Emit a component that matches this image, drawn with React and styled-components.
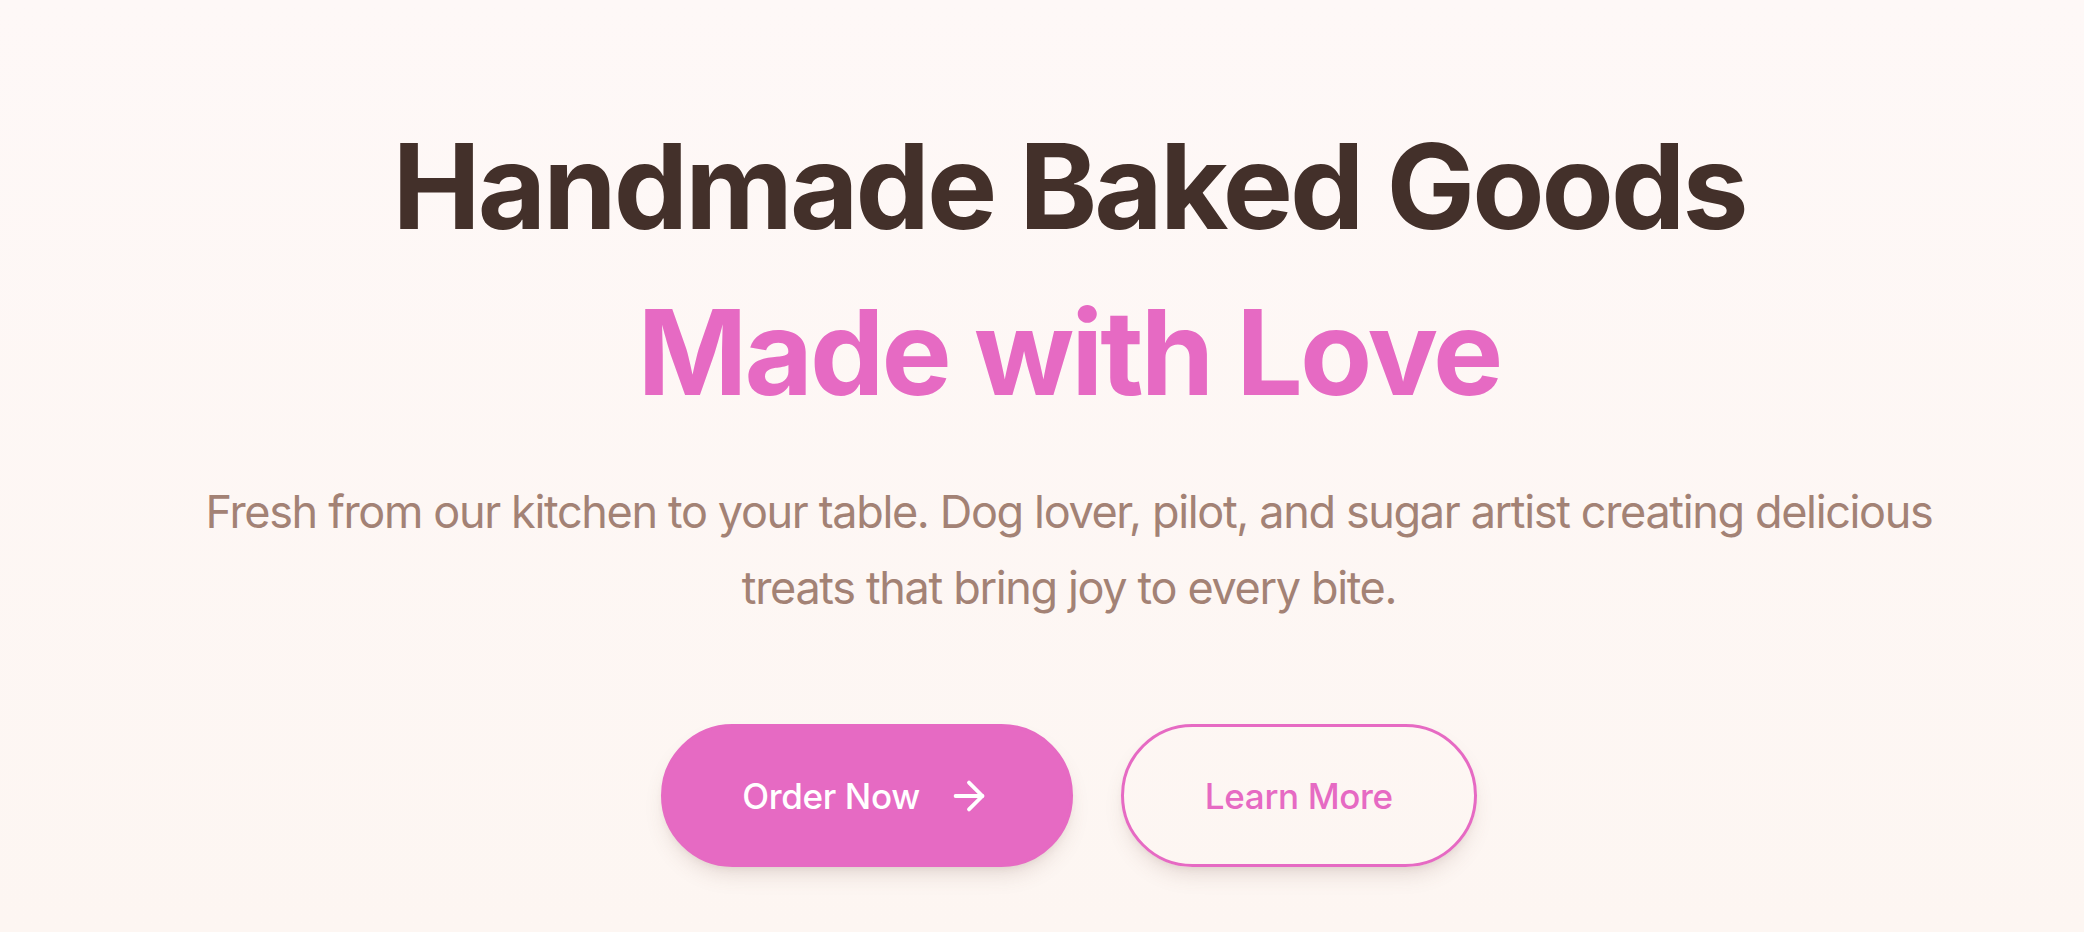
import React from "react";
import styled, { createGlobalStyle } from "styled-components";
import { ArrowRight } from "lucide-react";

const GlobalStyle = createGlobalStyle`
	* {
		box-sizing: border-box;
	}
	html,
	body {
		margin: 0;
		padding: 0;
	}
	body {
		font-family: Inter, "Noto Sans", "Liberation Sans", sans-serif;
		background: #fef8f6;
	}
`;

const Hero = styled.section`
	min-height: 932px;
	display: flex;
	flex-direction: column;
	align-items: center;
	padding: 103px 0 0 54px;
	background: linear-gradient(180deg, #fef8f7 0%, #fdf6f2 100%);
`;

const Heading = styled.h1`
	margin: 0;
	text-align: center;
	font-size: 118px;
	font-weight: 700;
	line-height: 166px;
	letter-spacing: -0.025em;
`;

const HeadingLine = styled.span`
	display: block;
	color: ${(p) => p.color};
`;

const Lead = styled.p`
	margin: 39px 0 0;
	max-width: 1760px;
	text-align: center;
	font-size: 45px;
	line-height: 76px;
	font-weight: 400;
	letter-spacing: -0.03em;
	color: #a38275;
`;

const Actions = styled.div`
	display: flex;
	gap: 48px;
	margin-top: 98px;
`;

const Button = styled.button`
	display: inline-flex;
	align-items: center;
	justify-content: center;
	gap: 26px;
	height: 143px;
	padding: 0 ${(p) => (p.$outline ? 81 : 78)}px;
	border-radius: 999px;
	border: 3px solid #e66ac3;
	font-family: inherit;
	font-size: 35px;
	font-weight: 500;
	letter-spacing: -0.01em;
	cursor: pointer;
	background: ${(p) => (p.$outline ? "transparent" : "#e66ac3")};
	color: ${(p) => (p.$outline ? "#e66ac3" : "#ffffff")};
	box-shadow: 0 12px 22px -6px rgba(110, 70, 60, 0.18),
		0 4px 8px -4px rgba(110, 70, 60, 0.12);
`;

export default function App() {
	return (
		<>
			<GlobalStyle />
			<Hero>
				<Heading>
					<HeadingLine color="#43302a">Handmade Baked Goods</HeadingLine>
					<HeadingLine color="#e66ac3">Made with Love</HeadingLine>
				</Heading>
				<Lead>
					Fresh from our kitchen to your table. Dog lover, pilot, and sugar artist creating
					delicious treats that bring joy to every bite.
				</Lead>
				<Actions>
					<Button>
						Order Now
						<ArrowRight size={46} strokeWidth={2} />
					</Button>
					<Button $outline>Learn More</Button>
				</Actions>
			</Hero>
		</>
	);
}
